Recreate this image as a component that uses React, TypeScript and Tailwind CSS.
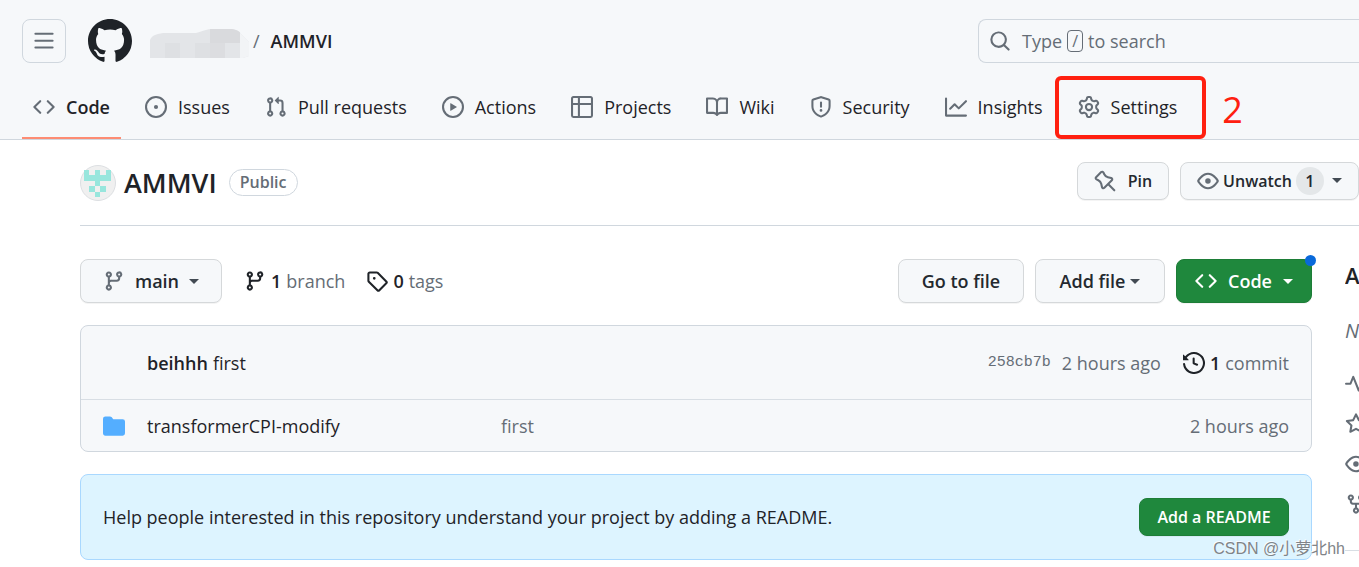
import type { ReactNode } from "react";

const ICONS = {
  bars: "M1 2.75A.75.75 0 0 1 1.75 2h12.5a.75.75 0 0 1 0 1.5H1.75A.75.75 0 0 1 1 2.75Zm0 5A.75.75 0 0 1 1.75 7h12.5a.75.75 0 0 1 0 1.5H1.75A.75.75 0 0 1 1 7.75ZM1.75 12h12.5a.75.75 0 0 1 0 1.5H1.75a.75.75 0 0 1 0-1.5Z",
  github:
    "M8 0c4.42 0 8 3.58 8 8a8.013 8.013 0 0 1-5.45 7.59c-.4.08-.55-.17-.55-.38 0-.27.01-1.13.01-2.2 0-.75-.25-1.23-.54-1.48 1.78-.2 3.65-.88 3.65-3.95 0-.88-.31-1.59-.82-2.15.08-.2.36-1.02-.08-2.12 0 0-.67-.22-2.2.82-.64-.18-1.32-.27-2-.27-.68 0-1.36.09-2 .27-1.53-1.03-2.2-.82-2.2-.82-.44 1.1-.16 1.92-.08 2.12-.51.56-.82 1.28-.82 2.15 0 3.06 1.86 3.75 3.64 3.95-.23.2-.44.55-.51 1.07-.46.21-1.61.55-2.33-.66-.15-.24-.6-.83-1.23-.82-.67.01-.27.38.01.53.34.19.73.9.82 1.13.16.45.68 1.31 2.69.94 0 .67.01 1.3.01 1.49 0 .21-.15.45-.55.38A7.995 7.995 0 0 1 0 8c0-4.42 3.58-8 8-8Z",
  code: "m11.28 3.22 4.25 4.25a.75.75 0 0 1 0 1.06l-4.25 4.25a.749.749 0 0 1-1.275-.326.749.749 0 0 1 .215-.734L13.94 8l-3.72-3.72a.749.749 0 0 1 .326-1.275.749.749 0 0 1 .734.215Zm-6.56 0a.751.751 0 0 1 1.042.018.751.751 0 0 1 .018 1.042L2.06 8l3.72 3.72a.749.749 0 0 1-.326 1.275.749.749 0 0 1-.734-.215L.47 8.53a.75.75 0 0 1 0-1.06Z",
  issue:
    "M8 9.5a1.5 1.5 0 1 0 0-3 1.5 1.5 0 0 0 0 3ZM8 0a8 8 0 1 1 0 16A8 8 0 0 1 8 0ZM1.5 8a6.5 6.5 0 1 0 13 0 6.5 6.5 0 0 0-13 0Z",
  pull: "M1.5 3.25a2.25 2.25 0 1 1 3 2.122v5.256a2.251 2.251 0 1 1-1.5 0V5.372A2.25 2.25 0 0 1 1.5 3.25Zm5.677-.177L9.573.677A.25.25 0 0 1 10 .854V2.5h1A2.5 2.5 0 0 1 13.5 5v5.628a2.251 2.251 0 1 1-1.5 0V5a1 1 0 0 0-1-1h-1v1.646a.25.25 0 0 1-.427.177L7.177 3.427a.25.25 0 0 1 0-.354ZM3.75 2.5a.75.75 0 1 0 0 1.5.75.75 0 0 0 0-1.5Zm0 9.5a.75.75 0 1 0 0 1.5.75.75 0 0 0 0-1.5Zm8.25.75a.75.75 0 1 0 1.5 0 .75.75 0 0 0-1.5 0Z",
  play: "M8 0a8 8 0 1 1 0 16A8 8 0 0 1 8 0ZM1.5 8a6.5 6.5 0 1 0 13 0 6.5 6.5 0 0 0-13 0Zm4.879-2.773 4.264 2.559a.25.25 0 0 1 0 .428l-4.264 2.559A.25.25 0 0 1 6 10.559V5.442a.25.25 0 0 1 .379-.215Z",
  table:
    "M0 1.75C0 .784.784 0 1.75 0h12.5C15.216 0 16 .784 16 1.75v12.5A1.75 1.75 0 0 1 14.25 16H1.75A1.75 1.75 0 0 1 0 14.25ZM6.5 6.5v8h7.75a.25.25 0 0 0 .25-.25V6.5Zm8-1.5V1.75a.25.25 0 0 0-.25-.25H6.5V5Zm-13 1.5v7.75c0 .138.112.25.25.25H5v-8ZM5 5V1.5H1.75a.25.25 0 0 0-.25.25V5Z",
  book: "M0 1.75A.75.75 0 0 1 .75 1h4.253c1.227 0 2.317.59 3 1.501A3.743 3.743 0 0 1 11.006 1h4.245a.75.75 0 0 1 .75.75v10.5a.75.75 0 0 1-.75.75h-4.507a2.25 2.25 0 0 0-1.591.659l-.622.621a.75.75 0 0 1-1.06 0l-.622-.621A2.25 2.25 0 0 0 5.258 13H.75a.75.75 0 0 1-.75-.75Zm7.251 10.324.004-5.073-.002-2.253A2.25 2.25 0 0 0 5.003 2.5H1.5v9h3.757a3.75 3.75 0 0 1 1.994.574ZM8.755 4.75l-.004 7.322a3.752 3.752 0 0 1 1.992-.572H14.5v-9h-3.495a2.25 2.25 0 0 0-2.25 2.25Z",
  shield:
    "M7.467.133a1.748 1.748 0 0 1 1.066 0l5.25 1.68A1.75 1.75 0 0 1 15 3.48V7c0 1.566-.32 3.182-1.303 4.682-.983 1.498-2.585 2.813-5.032 3.855a1.697 1.697 0 0 1-1.33 0c-2.447-1.042-4.049-2.357-5.032-3.855C1.32 10.182 1 8.566 1 7V3.48a1.75 1.75 0 0 1 1.217-1.667Zm.61 1.429a.25.25 0 0 0-.153 0l-5.25 1.68a.25.25 0 0 0-.174.238V7c0 1.358.275 2.666 1.057 3.86.784 1.194 2.121 2.34 4.366 3.297a.196.196 0 0 0 .154 0c2.245-.956 3.582-2.104 4.366-3.298C13.225 9.666 13.5 8.36 13.5 7V3.48a.251.251 0 0 0-.174-.237l-5.25-1.68ZM8.75 4.75v3a.75.75 0 0 1-1.5 0v-3a.75.75 0 0 1 1.5 0ZM9 10.5a1 1 0 1 1-2 0 1 1 0 0 1 2 0Z",
  graph:
    "M1.5 1.75V13.5h13.75a.75.75 0 0 1 0 1.5H.75a.75.75 0 0 1-.75-.75V1.75a.75.75 0 0 1 1.5 0Zm14.28 2.53-5.25 5.25a.75.75 0 0 1-1.06 0L7 7.06 4.28 9.78a.751.751 0 0 1-1.042-.018.751.751 0 0 1-.018-1.042l3.25-3.25a.75.75 0 0 1 1.06 0L10 7.94l4.72-4.72a.751.751 0 0 1 1.042.018.751.751 0 0 1 .018 1.042Z",
  gear: "M8 0a8.2 8.2 0 0 1 .701.031C9.444.095 9.99.645 10.16 1.29l.288 1.107c.018.066.079.158.212.224.231.114.454.243.668.386.123.082.233.09.299.071l1.103-.303c.644-.176 1.392.021 1.82.63.27.385.506.792.704 1.218.315.675.111 1.422-.364 1.891l-.814.806c-.049.048-.098.147-.088.294.016.257.016.515 0 .772-.01.147.038.246.088.294l.814.806c.475.469.679 1.216.364 1.891a7.977 7.977 0 0 1-.704 1.217c-.428.61-1.176.807-1.82.63l-1.102-.302c-.067-.019-.177-.011-.3.071a5.909 5.909 0 0 1-.668.386c-.133.066-.194.158-.211.224l-.29 1.106c-.168.646-.715 1.196-1.458 1.26a8.006 8.006 0 0 1-1.402 0c-.743-.064-1.289-.614-1.458-1.26l-.289-1.106c-.018-.066-.079-.158-.212-.224a5.738 5.738 0 0 1-.668-.386c-.123-.082-.233-.09-.299-.071l-1.103.303c-.644.176-1.392-.021-1.82-.63a8.12 8.12 0 0 1-.704-1.218c-.315-.675-.111-1.422.363-1.891l.815-.806c.05-.048.098-.147.088-.294a6.214 6.214 0 0 1 0-.772c.01-.147-.038-.246-.088-.294l-.815-.806C.635 6.045.431 5.298.746 4.623a7.92 7.92 0 0 1 .704-1.217c.428-.61 1.176-.807 1.82-.63l1.102.302c.067.019.177.011.3-.071.214-.143.437-.272.668-.386.133-.066.194-.158.211-.224l.29-1.106C6.009.645 6.556.095 7.299.03 7.53.01 7.764 0 8 0Zm-.571 1.525c-.036.003-.108.036-.137.146l-.289 1.105c-.147.561-.549.967-.998 1.189-.173.086-.34.183-.5.29-.417.278-.97.423-1.529.27l-1.103-.303c-.109-.03-.175.016-.195.045-.22.312-.412.644-.573.99-.014.031-.021.11.059.19l.815.806c.411.406.562.957.53 1.456a4.709 4.709 0 0 0 0 .582c.032.499-.119 1.05-.53 1.456l-.815.806c-.081.08-.073.159-.059.19.162.346.353.677.573.989.02.03.085.076.195.046l1.102-.303c.56-.153 1.113-.008 1.53.27.161.107.328.204.501.29.447.222.85.629.997 1.189l.289 1.105c.029.109.101.143.137.146a6.6 6.6 0 0 0 1.142 0c.036-.003.108-.036.137-.146l.289-1.105c.147-.561.549-.967.998-1.189.173-.086.34-.183.5-.29.417-.278.97-.423 1.529-.27l1.103.303c.109.029.175-.016.195-.045.22-.313.411-.644.573-.99.014-.031.021-.11-.059-.19l-.815-.806c-.411-.406-.562-.957-.53-1.456a4.709 4.709 0 0 0 0-.582c-.032-.499.119-1.05.53-1.456l.815-.806c.081-.08.073-.159.059-.19a6.464 6.464 0 0 0-.573-.989c-.02-.03-.085-.076-.195-.046l-1.102.303c-.56.153-1.113.008-1.53-.27a4.44 4.44 0 0 0-.501-.29c-.447-.222-.85-.629-.997-1.189l-.289-1.105c-.029-.11-.101-.143-.137-.146a6.6 6.6 0 0 0-1.142 0ZM11 8a3 3 0 1 1-6 0 3 3 0 0 1 6 0ZM9.5 8a1.5 1.5 0 1 0-3.001.001A1.5 1.5 0 0 0 9.5 8Z",
  search:
    "M10.68 11.74a6 6 0 0 1-7.922-8.982 6 6 0 0 1 8.982 7.922l3.04 3.04a.749.749 0 0 1-.326 1.275.749.749 0 0 1-.734-.215ZM11.5 7a4.499 4.499 0 1 0-8.997 0A4.499 4.499 0 0 0 11.5 7Z",
  pin: "m11.294.984 3.722 3.722a1.75 1.75 0 0 1-.504 2.826l-1.327.613a3.089 3.089 0 0 0-1.707 2.084l-.584 2.454c-.317 1.332-1.972 1.8-2.94.832L5.75 11.311 1.78 15.28a.749.749 0 1 1-1.06-1.06l3.969-3.97-2.204-2.204c-.968-.968-.5-2.623.832-2.94l2.454-.584a3.08 3.08 0 0 0 2.084-1.707l.613-1.327a1.75 1.75 0 0 1 2.826-.504ZM6.283 9.723l2.732 2.731a.25.25 0 0 0 .42-.119l.584-2.454a4.586 4.586 0 0 1 2.537-3.098l1.328-.613a.25.25 0 0 0 .072-.404l-3.722-3.722a.25.25 0 0 0-.404.072l-.613 1.328a4.584 4.584 0 0 1-3.098 2.537l-2.454.584a.25.25 0 0 0-.119.42l2.731 2.732Z",
  eye: "M8 2c1.981 0 3.671.992 4.933 2.078 1.27 1.091 2.187 2.345 2.637 3.023a1.62 1.62 0 0 1 0 1.798c-.45.678-1.367 1.932-2.637 3.023C11.67 13.008 9.981 14 8 14c-1.981 0-3.671-.992-4.933-2.078C1.797 10.83.88 9.576.43 8.898a1.62 1.62 0 0 1 0-1.798c.45-.677 1.367-1.931 2.637-3.022C4.33 2.992 6.019 2 8 2ZM1.679 7.932a.12.12 0 0 0 0 .136c.411.622 1.241 1.75 2.366 2.717C5.176 11.758 6.527 12.5 8 12.5c1.473 0 2.825-.742 3.955-1.715 1.124-.967 1.954-2.096 2.366-2.717a.12.12 0 0 0 0-.136c-.412-.621-1.242-1.75-2.366-2.717C10.824 4.242 9.473 3.5 8 3.5c-1.473 0-2.825.742-3.955 1.715-1.124.967-1.954 2.096-2.366 2.717ZM8 10a2 2 0 1 1-.001-3.999A2 2 0 0 1 8 10Z",
  branch:
    "M9.5 3.25a2.25 2.25 0 1 1 3 2.122V6A2.5 2.5 0 0 1 10 8.5H6a1 1 0 0 0-1 1v1.128a2.251 2.251 0 1 1-1.5 0V5.372a2.25 2.25 0 1 1 1.5 0v1.836A2.493 2.493 0 0 1 6 7h4a1 1 0 0 0 1-1v-.628A2.25 2.25 0 0 1 9.5 3.25Zm-6 0a.75.75 0 1 0 1.5 0 .75.75 0 0 0-1.5 0Zm8.25-.75a.75.75 0 1 0 0 1.5.75.75 0 0 0 0-1.5ZM4.25 12a.75.75 0 1 0 0 1.5.75.75 0 0 0 0-1.5Z",
  tag: "M1 7.775V2.75C1 1.784 1.784 1 2.75 1h5.025c.464 0 .91.184 1.238.513l6.25 6.25a1.75 1.75 0 0 1 0 2.474l-5.026 5.026a1.75 1.75 0 0 1-2.474 0l-6.25-6.25A1.752 1.752 0 0 1 1 7.775Zm1.5 0c0 .066.026.13.073.177l6.25 6.25a.25.25 0 0 0 .354 0l5.025-5.025a.25.25 0 0 0 0-.354l-6.25-6.25a.25.25 0 0 0-.177-.073H2.75a.25.25 0 0 0-.25.25ZM6 5a1 1 0 1 1 0 2 1 1 0 0 1 0-2Z",
  history:
    "m.427 1.927 1.215 1.215a8.002 8.002 0 1 1-1.6 5.685.75.75 0 1 1 1.493-.154 6.5 6.5 0 1 0 1.18-4.458l1.358 1.358A.25.25 0 0 1 3.896 6H.25A.25.25 0 0 1 0 5.75V2.104a.25.25 0 0 1 .427-.177ZM7.75 4a.75.75 0 0 1 .75.75v2.992l2.028.812a.75.75 0 0 1-.557 1.392l-2.5-1A.751.751 0 0 1 7 8.25v-3.5A.75.75 0 0 1 7.75 4Z",
  folder:
    "M1.75 1A1.75 1.75 0 0 0 0 2.75v10.5C0 14.216.784 15 1.75 15h12.5A1.75 1.75 0 0 0 16 13.25v-8.5A1.75 1.75 0 0 0 14.25 3H7.5a.25.25 0 0 1-.2-.1l-.9-1.2C6.07 1.26 5.55 1 5 1H1.75Z",
  pulse:
    "M6 2c.306 0 .582.187.696.471L10 10.731l1.304-3.26A.751.751 0 0 1 12 7h3.25a.75.75 0 0 1 0 1.5h-2.742l-1.812 4.528a.751.751 0 0 1-1.392 0L6 4.77 4.696 8.03A.75.75 0 0 1 4 8.5H.75a.75.75 0 0 1 0-1.5h2.742l1.812-4.529A.751.751 0 0 1 6 2Z",
  star: "M8 .25a.75.75 0 0 1 .673.418l1.882 3.815 4.21.612a.75.75 0 0 1 .416 1.279l-3.046 2.97.719 4.192a.751.751 0 0 1-1.088.791L8 12.347l-3.766 1.98a.75.75 0 0 1-1.088-.79l.72-4.194L.818 6.374a.75.75 0 0 1 .416-1.28l4.21-.611L7.327.668A.75.75 0 0 1 8 .25Zm0 2.445L6.615 5.5a.75.75 0 0 1-.564.41l-3.097.45 2.24 2.184a.75.75 0 0 1 .216.664l-.528 3.084 2.769-1.456a.75.75 0 0 1 .698 0l2.77 1.456-.53-3.084a.75.75 0 0 1 .216-.664l2.24-2.183-3.096-.45a.75.75 0 0 1-.564-.41L8 2.694Z",
  fork: "M5 5.372v.878c0 .414.336.75.75.75h4.5a.75.75 0 0 0 .75-.75v-.878a2.25 2.25 0 1 1 1.5 0v.878a2.25 2.25 0 0 1-2.25 2.25h-1.5v2.128a2.251 2.251 0 1 1-1.5 0V8.5h-1.5A2.25 2.25 0 0 1 3.5 6.25v-.878a2.25 2.25 0 1 1 1.5 0ZM5 3.25a.75.75 0 1 0-1.5 0 .75.75 0 0 0 1.5 0Zm6.75.75a.75.75 0 1 0 0-1.5.75.75 0 0 0 0 1.5Zm-3 8.75a.75.75 0 1 0-1.5 0 .75.75 0 0 0 1.5 0Z",
};

type IconName = keyof typeof ICONS;

function Icon({ name, className = "size-[22px] text-[#656d76]" }: { name: IconName; className?: string }) {
  return (
    <svg viewBox="0 0 16 16" fill="currentColor" aria-hidden="true" className={`shrink-0 ${className}`}>
      <path d={ICONS[name]} />
    </svg>
  );
}

function Caret({ className = "text-[#424a53]" }: { className?: string }) {
  return (
    <svg viewBox="0 0 10 5" fill="currentColor" aria-hidden="true" className={`h-[5px] w-[10px] shrink-0 ${className}`}>
      <path d="M0 0h10L5 5Z" />
    </svg>
  );
}

const TABS: { icon: IconName; label: string }[] = [
  { icon: "code", label: "Code" },
  { icon: "issue", label: "Issues" },
  { icon: "pull", label: "Pull requests" },
  { icon: "play", label: "Actions" },
  { icon: "table", label: "Projects" },
  { icon: "book", label: "Wiki" },
  { icon: "shield", label: "Security" },
  { icon: "graph", label: "Insights" },
  { icon: "gear", label: "Settings" },
];

function Button({ className, children }: { className: string; children: ReactNode }) {
  return (
    <button
      type="button"
      className={`flex shrink-0 items-center justify-center rounded-lg border font-semibold whitespace-nowrap shadow-[0_1px_0_rgba(31,35,40,0.05)] ${className}`}
    >
      {children}
    </button>
  );
}

function MaskedOwner() {
  return (
    <svg viewBox="0 0 100 29" aria-hidden="true" className="mt-1 h-[29px] w-[100px] shrink-0">
      <clipPath id="owner">
        <path d="M0 29V11C2 6 8 4 16 4h30C54 2 56 0 64 0h18c6 1 8 3 9 5l8 8v14l-6 2Z" />
      </clipPath>
      <g clipPath="url(#owner)" shapeRendering="crispEdges">
        <path fill="#e3e5e8" d="M0 0h100v29H0z" />
        <path fill="#dee0e3" d="M15 14h15v15H15zM45 14h30v15H45z" />
        <path fill="#d9dadd" d="M60 0h30v14H60z" />
        <path fill="#dcdde0" d="M60 14h15v15H60z" />
        <path fill="#f2f4f6" d="M90 0h10v29H90z" />
      </g>
    </svg>
  );
}

function Avatar() {
  return (
    <svg viewBox="0 0 36 36" aria-hidden="true" className="size-9 shrink-0">
      <circle cx="18" cy="18" r="17.5" fill="#f0f0f0" stroke="#dcdfe2" />
      <path
        fill="#98e6dd"
        d="M4 5h5v5h6V5h5v5h6V5h5v11H20v5h-5v-5H4ZM9 21h6v6H9zM20 21h6v6h-6zM15 27h5v5h-5z"
      />
    </svg>
  );
}

export default function App() {
  return (
    <div className="relative min-h-screen overflow-hidden bg-white font-['Open_Sans','Noto_Sans',sans-serif] text-lg leading-7 text-[#1f2328]">
      <header className="border-b border-[#d0d7de] bg-[#f6f8fa]">
        <div className="flex items-center pt-[19px] pl-[22px]">
          <button
            type="button"
            aria-label="Open menu"
            className="flex size-11 shrink-0 items-center justify-center rounded-lg border border-[#d0d7de]"
          >
            <Icon name="bars" />
          </button>
          <a href="#home" aria-label="Homepage" className="ml-[22px]">
            <Icon name="github" className="size-11 text-[#1f2328]" />
          </a>
          <div className="ml-[18px] flex items-center gap-[3px]">
            <MaskedOwner />
            <span className="text-[#656d76]">/</span>
            <a href="#repo" className="ml-2 font-semibold">
              AMMVI
            </a>
          </div>
          <label className="ml-auto flex h-11 w-[381px] items-center gap-[11px] rounded-l-lg border border-r-0 border-[#d0d7de] pl-[10px] text-[#656d76]">
            <Icon name="search" />
            <span className="grid grow items-center">
              <span className="col-start-1 row-start-1 flex items-center gap-[5px]">
                Type
                <kbd className="flex h-[22px] w-4 items-center justify-center rounded border border-[#656d76] font-[inherit] text-base">
                  /
                </kbd>
                to search
              </span>
              <input type="text" aria-label="Search" className="col-start-1 row-start-1 bg-transparent outline-none" />
            </span>
          </label>
        </div>

        <nav aria-label="Repository" className="mt-[13px] pl-[22px]">
          <ul className="flex gap-[13px]">
            {TABS.map(({ icon, label }) => (
              <li key={label} className="relative">
                <a
                  href={`#${label}`}
                  className={`flex h-[63px] items-center gap-[11px] border-b-2 px-[11px] whitespace-nowrap ${
                    label === "Code" ? "border-[#fd8c73] font-semibold" : "border-transparent"
                  }`}
                >
                  <Icon name={icon} />
                  {label}
                </a>
                {label === "Settings" && (
                  <>
                    <span className="absolute inset-y-0 -right-[18px] -left-[12px] rounded-md border-4 border-[#ff2010]" />
                    <span className="absolute top-[14px] left-full ml-[34px] text-4xl leading-10 text-[#ff2010]">2</span>
                  </>
                )}
              </li>
            ))}
          </ul>
        </nav>
      </header>

      <main className="pl-20">
        <div className="flex h-[86px] items-center border-b border-[#d0d7de]">
          <Avatar />
          <h1 className="ml-2 text-[27px] leading-9 font-semibold">AMMVI</h1>
          <span className="ml-3 rounded-full border border-[#d0d7de] px-[10px] text-base leading-[25px] font-semibold text-[#656d76]">
            Public
          </span>
          <div className="ml-auto flex gap-[11px] pb-1">
            <Button className="h-[38px] w-[92px] gap-3 border-[#d5d8da] bg-[#f6f8fa] text-base text-[#24292f]">
              <Icon name="pin" className="size-[22px] -scale-x-100 text-[#656d76]" />
              Pin
            </Button>
            <Button className="h-[38px] w-[179px] gap-1 border-[#d5d8da] bg-[#f6f8fa] text-base text-[#24292f]">
              <Icon name="eye" />
              Unwatch
              <span className="mr-1 flex size-7 items-center justify-center rounded-full bg-[#e4e7e9]">1</span>
              <Caret />
            </Button>
          </div>
        </div>

        <div className="mt-[33px] flex gap-[33px]">
          <div className="min-w-0 grow">
            <div className="flex items-center">
              <Button className="h-11 w-[142px] gap-[10px] border-[#d5d8da] bg-[#f6f8fa] text-[#24292f]">
                <Icon name="branch" />
                main
                <Caret />
              </Button>
              <a href="#branches" className="ml-[22px] flex items-center gap-[5px] text-[#656d76]">
                <Icon name="branch" className="size-[22px] text-[#1f2328]" />
                <strong className="font-semibold text-[#1f2328]">1</strong> branch
              </a>
              <a href="#tags" className="ml-[21px] flex items-center gap-[5px] text-[#656d76]">
                <Icon name="tag" className="size-[22px] text-[#1f2328]" />
                <strong className="font-semibold text-[#1f2328]">0</strong> tags
              </a>
              <div className="ml-auto flex gap-[11px]">
                <Button className="h-11 w-[126px] border-[#d5d8da] bg-[#f6f8fa] text-[#24292f]">Go to file</Button>
                <Button className="h-11 w-[130px] gap-[5px] border-[#d5d8da] bg-[#f6f8fa] text-[#24292f]">
                  Add file
                  <Caret />
                </Button>
                <div className="relative">
                  <Button className="h-11 w-[136px] gap-[11px] border-[#1d7d37] bg-[#1f883d] text-white">
                    <Icon name="code" className="size-[22px] text-white" />
                    Code
                    <Caret className="text-white" />
                  </Button>
                  <span className="absolute -top-1 -right-1 size-[11px] rounded-full bg-[#0969da]" />
                </div>
              </div>
            </div>

            <section className="mt-[22px] overflow-hidden rounded-lg border border-[#d0d7de] bg-[#f6f8fa]">
              <div className="flex h-[74px] items-center border-b border-[#d8dee4] pr-[22px] pl-[66px]">
                <strong className="font-semibold">beihhh</strong>
                <span className="ml-[5px]">first</span>
                <div className="ml-auto flex items-center text-[#656d76]">
                  <code className="font-['Liberation_Mono',monospace] text-[15px]">258cb7b</code>
                  <span className="ml-[11px]">2 hours ago</span>
                  <a href="#commits" className="ml-[22px] flex items-center gap-[5px]">
                    <Icon name="history" className="size-[22px] text-[#1f2328]" />
                    <strong className="font-semibold text-[#1f2328]">1</strong> commit
                  </a>
                </div>
              </div>
              <table className="w-full table-fixed">
                <tbody>
                  <tr className="h-[51px]">
                    <td className="w-[66px] pl-[22px]">
                      <Icon name="folder" className="size-[22px] text-[#54aeff]" />
                    </td>
                    <td className="w-[354px]">
                      <a href="#folder">transformerCPI-modify</a>
                    </td>
                    <td className="text-[#656d76]">first</td>
                    <td className="pr-[22px] text-right text-[#656d76]">2 hours ago</td>
                  </tr>
                </tbody>
              </table>
            </section>

            <section className="mt-[22px] flex h-[86px] items-center justify-between rounded-lg border border-[#a9d8ff] bg-[#ddf4ff] px-[22px]">
              <p>Help people interested in this repository understand your project by adding a README.</p>
              <Button className="h-[38px] w-[150px] border-[#1d7d37] bg-[#1f883d] text-base text-white">
                Add a README
              </Button>
            </section>
          </div>

          <aside className="w-[14px] shrink-0 overflow-hidden whitespace-nowrap">
            <h2 className="mt-[2px] text-[22px] leading-7 font-semibold">About</h2>
            <p className="mt-7 text-xl leading-7 text-[#656d76] italic">No description</p>
            <ul className="mt-7 flex flex-col gap-[18px]">
              <li>
                <Icon name="pulse" />
              </li>
              <li>
                <Icon name="star" />
              </li>
              <li>
                <Icon name="eye" />
              </li>
              <li>
                <Icon name="fork" />
              </li>
            </ul>
            <hr className="mt-[35px] border-[#d8dee4]" />
          </aside>
        </div>
      </main>

      <p className="absolute right-[14px] bottom-1 font-['Liberation_Sans','Noto_Sans_CJK_SC',sans-serif] text-base leading-7 text-[#808488] [text-shadow:-1px_-1px_0_rgba(255,255,255,0.8)]">
        CSDN @小萝北hh
      </p>
    </div>
  );
}
